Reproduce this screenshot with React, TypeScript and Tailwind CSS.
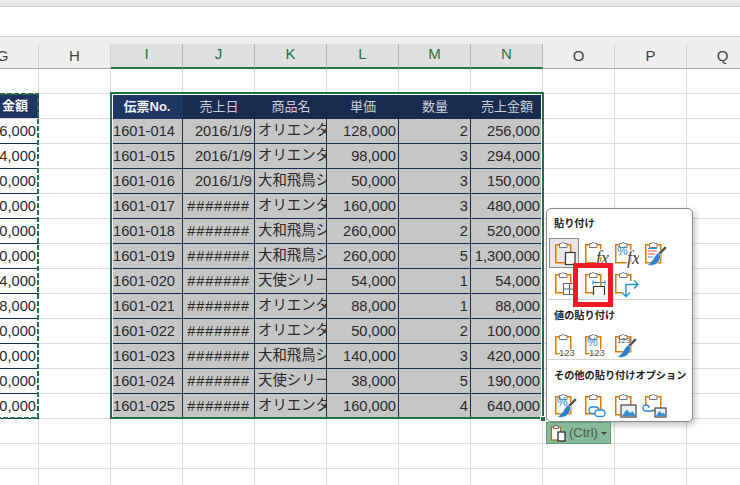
import React from "react";

const rows = [
  ["1601-014", "2016/1/9", "オリエンタ", "128,000", "2", "256,000", "6,000"],
  ["1601-015", "2016/1/9", "オリエンタ", "98,000", "3", "294,000", "4,000"],
  ["1601-016", "2016/1/9", "大和飛鳥シ", "50,000", "3", "150,000", "0,000"],
  ["1601-017", "#######", "オリエンタ", "160,000", "3", "480,000", "0,000"],
  ["1601-018", "#######", "大和飛鳥シ", "260,000", "2", "520,000", "0,000"],
  ["1601-019", "#######", "大和飛鳥シ", "260,000", "5", "1,300,000", "0,000"],
  ["1601-020", "#######", "天使シリー", "54,000", "1", "54,000", "4,000"],
  ["1601-021", "#######", "オリエンタ", "88,000", "1", "88,000", "8,000"],
  ["1601-022", "#######", "オリエンタ", "50,000", "2", "100,000", "0,000"],
  ["1601-023", "#######", "大和飛鳥シ", "140,000", "3", "420,000", "0,000"],
  ["1601-024", "#######", "天使シリー", "38,000", "5", "190,000", "0,000"],
  ["1601-025", "#######", "オリエンタ", "160,000", "4", "640,000", "0,000"],
];
const heads = ["伝票No.", "売上日", "商品名", "単価", "数量", "売上金額"];
const cols = ["G", "H", "I", "J", "K", "L", "M", "N", "O", "P", "Q"];
const selected = ["I", "J", "K", "L", "M", "N"];

function Blank() {
  return <div className="h-full w-[72px] shrink-0 border-r border-[#dcdcdc]" />;
}

function Board({ h = 18, children }: { h?: number; children?: React.ReactNode }) {
  return (
    <svg width="30" height="30" viewBox="0 0 30 30" className="shrink-0">
      <rect x="6.75" y="6.75" width="15" height={h} fill="none" stroke="#e07b00" strokeWidth="1.5" />
      <path d="M10.5 9.5V5.5h2.2a1.6 1.6 0 0 1 3 0H18v4z" fill="#fff" stroke="#7a7a7a" strokeWidth="1" />
      {children}
    </svg>
  );
}

const Fx = ({ x = 17 }: { x?: number }) => (
  <text x={x} y="26" fontFamily="Liberation Serif, serif" fontStyle="italic" fontSize="18" fill="#444" stroke="#fff" strokeWidth="2" paintOrder="stroke">fx</text>
);
const Pct = ({ x = 8, y = 17, s = 12 }: { x?: number; y?: number; s?: number }) => (
  <text x={x} y={y} fontFamily="Liberation Sans, sans-serif" fontSize={s} fill="#2b8fd6">%</text>
);
const N123 = ({ x = 10 }: { x?: number }) => (
  <text x={x} y="26" fontFamily="Liberation Sans, sans-serif" fontSize="9.5" fill="#555" stroke="#fff" strokeWidth="2" paintOrder="stroke">123</text>
);
const Brush = () => (
  <g>
    <path d="M18 16 L26 8 L28 10 L20 18z" fill="#555" stroke="#fff" strokeWidth="0.5" />
    <path d="M19 15 C15 18 14 24 8 27 C15 28.5 20 26 22 18z" fill="#2f7fc4" stroke="#fff" strokeWidth="0.5" />
  </g>
);
const Chain = ({ x = 0, y = 0 }: { x?: number; y?: number }) => (
  <g transform={`translate(${x} ${y})`} fill="#fff" stroke="#2b8fd6" strokeWidth="1.3">
    <rect x="11" y="17" width="10" height="6.5" rx="3.2" />
    <rect x="17" y="20" width="10" height="6.5" rx="3.2" />
  </g>
);
const Pic = ({ x = 12, y = 15, w = 15, h = 12 }: { x?: number; y?: number; w?: number; h?: number }) => (
  <g>
    <rect x={x} y={y} width={w} height={h} fill="#e8f3fb" stroke="#444" strokeWidth="1.2" />
    <path d={`M${x + 1} ${y + h - 1} l${w * 0.3} ${-h * 0.55} l${w * 0.25} ${h * 0.3} l${w * 0.15} ${-h * 0.15} l${w * 0.22} ${h * 0.4}z`} fill="#3b8fd0" />
  </g>
);

function Slot({ children, active }: { children: React.ReactNode; active?: boolean }) {
  return (
    <div className={`flex h-full w-[30px] shrink-0 items-center justify-center ${active ? "border border-[#8a8a8a] bg-[#e6e6e6]" : ""}`}>
      {children}
    </div>
  );
}

function Heading({ children, h }: { children: React.ReactNode; h: string }) {
  return <div className={`flex items-center pl-[7px] pt-[2px] text-[10.2px] font-bold leading-none text-[#222] ${h}`}>{children}</div>;
}

export default function App() {
  return (
    <div className="relative h-[485px] w-[740px] overflow-hidden bg-white font-['Liberation_Sans','Noto_Sans_CJK_JP',sans-serif] text-[14.67px] text-[#2a2a2a]">
      <div className="h-[7px] border-b border-[#d0d0d0] bg-gradient-to-b from-[#f0f0f0] to-[#e4e4e4]" />
      <div className="h-[30px] border-b border-[#d0d0d0] bg-white" />

      {/* column headers */}
      <div className="flex h-[32px] flex-col bg-[#efefef]">
        <div className="h-[7px]" />
        <div className="ml-[-33px] flex h-[25px] border-b border-[#a8a8a8]">
          {cols.map((c) =>
            selected.includes(c) ? (
              <div key={c} className="flex h-[25px] w-[72px] shrink-0 items-center justify-center border-r border-b-2 border-r-[#b4b4b4] border-b-[#217346] bg-[#e0e0e0] pb-[2px] text-[15px] text-[#217346]">
                {c}
              </div>
            ) : (
              <div key={c} className="flex w-[72px] shrink-0 items-center justify-center border-r border-[#d4d4d4] text-[15px] text-[#444]">
                {c}
              </div>
            )
          )}
        </div>
      </div>

      {/* empty row above table */}
      <div className="ml-[-33px] flex h-[25px] border-b border-[#dcdcdc]">
        {cols.map((c) => (
          <Blank key={c} />
        ))}
      </div>

      {/* table header */}
      <div className="ml-[-33px] flex h-[25px] border-b border-[#dcdcdc]">
        <div className="flex h-[24px] w-[72px] shrink-0 items-center justify-end bg-[#1f3564] pr-[11px] text-[13px] font-bold text-white">金額</div>
        <Blank />
        {heads.map((h, i) => (
          <div
            key={h}
            className={`flex h-[25px] w-[72px] shrink-0 items-center justify-center text-[13px] ${i === 0 ? "bg-[#1f3564] font-bold text-[#f4f4f4]" : "bg-[#1a2b52] text-[#c9ced8]"}`}
          >
            {h}
          </div>
        ))}
        <Blank />
        <Blank />
        <Blank />
      </div>

      {/* data rows */}
      {rows.map((r) => (
        <div key={r[0]} className="ml-[-33px] flex h-[25px]">
          <div className="flex w-[72px] shrink-0 items-center justify-end whitespace-nowrap border-b border-[#1a2b52] bg-white pr-[3px]">{r[6]}</div>
          <div className="w-[72px] shrink-0 border-r border-b border-[#dcdcdc]" />
          <div className="flex w-[72px] shrink-0 items-center whitespace-nowrap border-r border-b border-[#1a2b52] bg-[#c6c6c6] pl-[2px]">{r[0]}</div>
          <div className={`flex w-[72px] shrink-0 items-center justify-end whitespace-nowrap border-r border-b border-[#1a2b52] bg-[#c6c6c6] ${r[1].startsWith("#") ? "pr-[4px] tracking-[0.8px]" : "pr-[2px]"}`}>{r[1]}</div>
          <div className="flex w-[72px] shrink-0 items-center overflow-hidden whitespace-nowrap border-r border-b border-[#1a2b52] bg-[#c6c6c6] pl-[3px] text-[14.4px]">{r[2]}</div>
          <div className="flex w-[72px] shrink-0 items-center justify-end whitespace-nowrap border-r border-b border-[#1a2b52] bg-[#c6c6c6] pr-[2px]">{r[3]}</div>
          <div className="flex w-[72px] shrink-0 items-center justify-end whitespace-nowrap border-r border-b border-[#1a2b52] bg-[#c6c6c6] pr-[2px]">{r[4]}</div>
          <div className="flex w-[72px] shrink-0 items-center justify-end whitespace-nowrap border-b border-[#1a2b52] bg-[#c6c6c6] pr-[3px]">{r[5]}</div>
          <div className="w-[72px] shrink-0 border-r border-b border-[#dcdcdc]" />
          <div className="w-[72px] shrink-0 border-r border-b border-[#dcdcdc]" />
          <div className="w-[72px] shrink-0 border-r border-b border-[#dcdcdc]" />
        </div>
      ))}

      {/* empty rows below */}
      {[0, 1, 2].map((k) => (
        <div key={k} className="ml-[-33px] flex h-[25px] border-b border-[#dcdcdc]">
          {cols.map((c) => (
            <Blank key={c} />
          ))}
        </div>
      ))}

      {/* copy source marching ants */}
      <svg className="pointer-events-none absolute left-0 top-[92px]" width="40" height="328" viewBox="0 0 40 328">
        <path d="M0 2H38V326H0" fill="none" stroke="#217346" strokeWidth="2" strokeDasharray="5 2" />
      </svg>

      {/* selection */}
      <div className="pointer-events-none absolute left-[110px] top-[92px] h-[327px] w-[434px] border-2 border-[#217346]">
        <div className="absolute inset-0 border-t border-r border-l border-white" />
      </div>
      <div className="absolute left-[540px] top-[416px] h-[6px] w-[6px] border border-white bg-[#217346]" />

      {/* paste menu */}
      <div className="absolute left-[546px] top-[208px] z-10 flex h-[214px] w-[147px] flex-col rounded-[5px] border border-[#8c8c8c] bg-white shadow-[2px_3px_6px_rgba(0,0,0,0.25)]">
        <Heading h="h-[29px]">貼り付け</Heading>
        <div className="flex h-[30px] pl-[1.5px]">
          <Slot active>
            <Board>
              <rect x="16.5" y="14.5" width="9.5" height="12" fill="#fff" stroke="#333" strokeWidth="1.2" />
            </Board>
          </Slot>
          <Slot><Board><Fx /></Board></Slot>
          <Slot><Board><Pct /><Fx x={18} /></Board></Slot>
          <Slot>
            <Board>
              <path d="M9 13h9M9 16h7" stroke="#e05050" strokeWidth="1.2" />
              <path d="M9 10.5h9M9 19h5" stroke="#2b8fd6" strokeWidth="1.2" />
              <Brush />
            </Board>
          </Slot>
        </div>
        <div className="flex h-[30px] pl-[1.5px]">
          <Slot>
            <Board>
              <path d="M14.5 15.5h12v11h-12zM20.5 15.5v11M14.5 21h12" fill="#fff" stroke="#666" strokeWidth="1.1" />
            </Board>
          </Slot>
          <Slot>
            <Board>
              <path d="M14 14.5h12M14 12.5v4M26 12.5v4" stroke="#2b8fd6" strokeWidth="1.2" fill="none" />
              <path d="M14.5 27v-8.5h11V27" fill="#fff" stroke="#333" strokeWidth="1.2" />
            </Board>
          </Slot>
          <Slot>
            <Board>
              <path d="M17 13h12v15h-16v-9h4z" fill="#fff" />
              <path d="M25 12.5l4 4-4 4M28.5 16.5H17V28M13 24.5l4 4 4-4" fill="none" stroke="#2b8fd6" strokeWidth="1.4" />
            </Board>
          </Slot>
        </div>
        <div className="mx-[1px] my-[1px] h-px bg-[#d4d4d4]" />
        <Heading h="h-[29px]">値の貼り付け</Heading>
        <div className="flex h-[29px] pl-[1.5px]">
          <Slot><Board h={17}><N123 /></Board></Slot>
          <Slot><Board h={17}><Pct y={16} /><N123 /></Board></Slot>
          <Slot>
            <Board h={15}>
              <text x="8" y="13" fontFamily="Liberation Sans, sans-serif" fontSize="8" fill="#555">123</text>
              <Brush />
            </Board>
          </Slot>
        </div>
        <div className="mx-[1px] h-px bg-[#d4d4d4]" />
        <Heading h="h-[30px]">その他の貼り付けオプション</Heading>
        <div className="flex h-[30px] pl-[1.5px]">
          <Slot><Board h={17}><Pct y={16} /><Brush /></Board></Slot>
          <Slot><Board h={17}><Chain x={-1} /></Board></Slot>
          <Slot><Board h={18}><Pic /></Board></Slot>
          <Slot>
            <Board h={14}>
              <path d="M10 18a3 3 0 1 0-6 0a3 3 0 0 0 3 3h4a2.5 2.5 0 0 0 3-2" fill="#fff" stroke="#2b8fd6" strokeWidth="1.3" />
              <Pic x={16} y={18} w={11} h={9} />
            </Board>
          </Slot>
        </div>
      </div>

      {/* paste options button */}
      <div className="absolute left-[546px] top-[422px] z-10 flex h-[22px] w-[65px] items-center border border-[#5f9e78] bg-[#87ba9b] pl-[3px] text-[13px] text-[#4a5a50]">
        <svg width="17" height="18" viewBox="0 0 17 18" className="shrink-0">
          <rect x="1.5" y="3" width="9" height="13" fill="#fff" stroke="#b5651d" strokeWidth="1.2" />
          <path d="M3.5 4.5V2h1.5a1 1 0 0 1 2 0h1.5v2.5z" fill="#eee" stroke="#555" strokeWidth="0.8" />
          <rect x="8" y="8" width="7" height="9" fill="#fff" stroke="#222" strokeWidth="1.2" />
        </svg>
        <span className="ml-[2px]">(Ctrl)</span>
        <span className="ml-[3px] h-0 w-0 border-x-[3px] border-t-[3px] border-x-transparent border-t-[#444]" />
      </div>

      {/* red highlight */}
      <div className="absolute left-[573px] top-[263px] z-20 h-[44px] w-[40px] border-[5px] border-[#ed1c24]" />
    </div>
  );
}
